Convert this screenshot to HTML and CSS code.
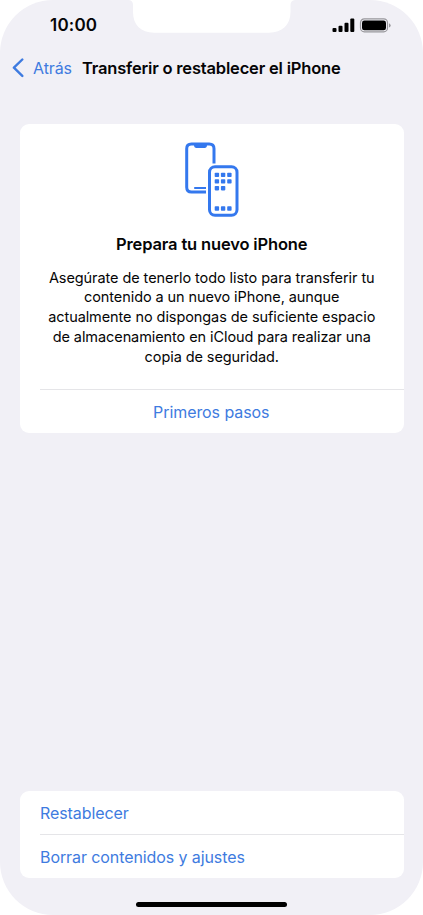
FILE: index.html
```html
<!DOCTYPE html>
<html lang="es">
<head>
<meta charset="utf-8">
<title>Transferir o restablecer el iPhone</title>
<link rel="stylesheet" href="styles.css">
</head>
<body>
<main class="phone">
  <svg class="notch" viewBox="0 0 174 33" aria-hidden="true"><path d="M4 0H170Q165.500 0.500 165.500 5V12C165.500 25 157 32.700 144 32.700H29C16 32.700 8 25 8 12V5Q8 0.500 4 0Z"/></svg>
  <header class="status">
    <span class="time">10:00</span>
    <svg class="indicators" viewBox="0 0 60 16" aria-hidden="true">
      <rect x="0.500" y="10" width="4" height="4" rx="1"/>
      <rect x="6.500" y="7.700" width="4" height="6.300" rx="1"/>
      <rect x="12.500" y="4.800" width="4" height="9.200" rx="1"/>
      <rect x="18.300" y="0.500" width="4" height="13.500" rx="1"/>
      <rect class="shell" x="28.500" y="0.900" width="27" height="12.900" rx="3.800"/>
      <rect x="30" y="2.500" width="24" height="9.800" rx="2.400"/>
      <path class="cap" d="M57 5.300Q58.700 6 58.700 7.400T57 9.500Z"/>
    </svg>
  </header>
  <nav class="nav">
    <a class="back"><svg class="chevron" viewBox="0 0 12 20" aria-hidden="true"><path d="M10.300 1.500L1.900 9.700L10.300 17.900"/></svg><span class="back-label">Atrás</span></a>
    <h1 class="title">Transferir o restablecer el iPhone</h1>
  </nav>
  <section class="card prepare">
    <svg class="devices" viewBox="0 0 56 76" aria-hidden="true">
      <path class="outline" d="M22 51H7.500Q2.700 51 2.700 46.200V7.800Q2.700 3 7.500 3H25.200Q30 3 30 7.800V22.500"/>
      <path class="solid" d="M10 2.500H23V4Q23 7 20.500 7H12.500Q10 7 10 4Z"/>
      <path class="line" d="M10.200 47H22"/>
      <rect class="outline" x="25.500" y="25.800" width="27.500" height="48.400" rx="5.500"/>
      <g class="solid">
        <rect x="30.700" y="31.700" width="4.400" height="4.400" rx=".8"/><rect x="36.900" y="31.700" width="4.400" height="4.400" rx=".8"/><rect x="43.200" y="31.700" width="4.400" height="4.400" rx=".8"/>
        <rect x="30.700" y="38.200" width="4.400" height="4.400" rx=".8"/><rect x="36.900" y="38.200" width="4.400" height="4.400" rx=".8"/><rect x="43.200" y="38.200" width="4.400" height="4.400" rx=".8"/>
        <rect x="30.700" y="45" width="4.400" height="4.400" rx=".8"/><rect x="36.900" y="45" width="4.400" height="4.400" rx=".8"/>
        <rect x="30.700" y="65.300" width="4.400" height="4.400" rx=".8"/><rect x="36.900" y="65.300" width="4.400" height="4.400" rx=".8"/><rect x="43.200" y="65.300" width="4.400" height="4.400" rx=".8"/>
      </g>
    </svg>
    <h2 class="heading">Prepara tu nuevo iPhone</h2>
    <p class="text">Asegúrate de tenerlo todo listo para transferir tu<br>contenido a un nuevo iPhone, aunque<br>actualmente no dispongas de suficiente espacio<br>de almacenamiento en iCloud para realizar una<br>copia de seguridad.</p>
    <a class="start"><span>Primeros pasos</span></a>
  </section>
  <section class="card actions">
    <a class="row reset">Restablecer</a>
    <a class="row erase">Borrar contenidos y ajustes</a>
  </section>
  <div class="home"></div>
</main>
</body>
</html>
```
FILE: styles.css
```css
* { box-sizing: border-box; }
body { margin: 0; background: #fff; }
.phone {
  position: relative;
  display: flex;
  flex-direction: column;
  width: 423px;
  height: 915px;
  overflow: hidden;
  border-radius: 53px;
  background: #f1f0f6;
  color: #050506;
  font-family: Inter, sans-serif;
}
.notch { position: absolute; top: 0; left: 125px; width: 174px; height: 33px; fill: #fff; }
.status {
  display: flex;
  justify-content: space-between;
  align-items: flex-start;
  height: 48px;
  padding: 15px 31px 0 50px;
}
.time { font-size: 17px; line-height: 21px; font-weight: 600; letter-spacing: 0.2px; }
.indicators { width: 60px; height: 16px; margin-top: 2.500px; }
.shell { fill: none; stroke: #98979c; stroke-width: 1.2; }
.cap { fill: #98979c; }
.nav { display: flex; align-items: center; height: 40px; padding-left: 12px; }
.back { display: flex; align-items: center; width: 70px; color: #3e7be0; }
.chevron { width: 12px; height: 20px; margin-right: 9px; fill: none; stroke: #3e7be0; stroke-width: 2.4; stroke-linecap: round; stroke-linejoin: round; }
.back-label { font-size: 16px; letter-spacing: -0.1px; }
.title { margin: 0; font-size: 16.500px; font-weight: 600; letter-spacing: -0.18px; white-space: nowrap; }
.card { display: flex; flex-direction: column; width: 383.500px; margin-left: 20px; border-radius: 9px; background: #fff; overflow: hidden; }
.prepare { align-items: center; height: 309px; margin-top: 36px; padding-top: 16.500px; }
.devices { width: 56px; height: 76px; }
.outline { fill: none; stroke: #3478ee; stroke-width: 3; stroke-linecap: butt; }
.line { fill: none; stroke: #3478ee; stroke-width: 1.800; }
.solid { fill: #3478ee; }
.heading { margin: 17px 0 0; font-size: 16.500px; line-height: 21px; font-weight: 600; letter-spacing: -0.15px; white-space: nowrap; }
.text { margin: 13px 0 0; font-size: 14.500px; line-height: 19.800px; letter-spacing: -0.08px; text-align: center; white-space: nowrap; }
.start {
  display: flex;
  align-items: center;
  justify-content: center;
  align-self: flex-end;
  width: 363.500px;
  height: 44px;
  margin-top: auto;
  padding-right: 21px;
  border-top: 1px solid #e5e5e8;
  color: #3e7be0;
  font-size: 16px;
  letter-spacing: -0.08px;
}
.actions { height: 87px; margin-top: auto; padding-left: 20px; color: #3e7be0; font-size: 16px; letter-spacing: -0.09px; }
.row { display: flex; align-items: center; height: 43px; padding-top: 1px; }
.erase { height: 44px; padding-top: 0; border-top: 1px solid #e5e5e8; }
.home { flex: none; width: 151px; height: 5px; margin: 24px 0 8px 136px; border-radius: 3px; background: #000; }
```
